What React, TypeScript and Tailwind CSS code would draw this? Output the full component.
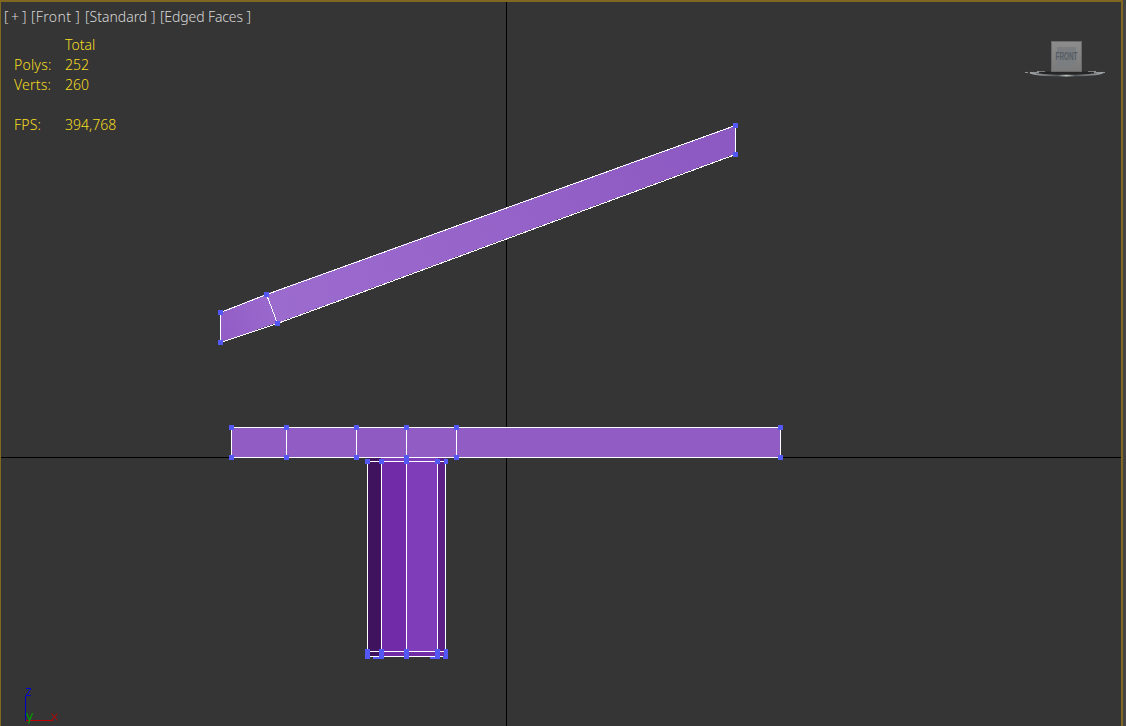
import React from 'react';

const labels = [
  { text: '[', box: 'w-[7px]', spacing: 'tracking-[0px]' },
  { text: '+', box: 'w-[10px]', spacing: 'tracking-[0px]' },
  { text: ']', box: 'w-[10px]', spacing: 'tracking-[0px] pl-[1px]' },
  { text: '[Front ]', box: 'w-[54px]', spacing: 'tracking-[0.35px]' },
  { text: '[Standard ]', box: 'w-[75px]', spacing: 'tracking-[0px]' },
  { text: '[Edged Faces ]', box: 'w-[100px]', spacing: 'tracking-[-0.12px]' },
];

const stats = [
  ['', 'Total'],
  ['Polys:', '252'],
  ['Verts:', '260'],
  ['', ''],
  ['FPS:', '394,768'],
];

const vertices: [number, number][] = [
  [735, 125], [735, 154], [266, 294], [277, 323], [220, 312], [220, 342],
  [231, 427], [286, 427], [356, 427], [406, 427], [456, 427], [780, 427],
  [231, 457], [286, 457], [356, 457], [406, 457], [456, 457], [780, 457],
  [367, 461], [381, 461], [406, 461], [437, 461],
  [367, 651], [381, 651], [406, 651], [437, 651],
  [367, 656], [381, 656], [406, 656], [437, 656],
];

function Scene() {
  return (
    <svg className="absolute inset-0" width="1126" height="726" shapeRendering="crispEdges">
      <defs>
        <linearGradient id="roof" gradientUnits="userSpaceOnUse" x1="277" y1="310" x2="735" y2="140">
          <stop offset="0" stopColor="#9c6bce" />
          <stop offset="0.35" stopColor="#9866cb" />
          <stop offset="1" stopColor="#8c58c1" />
        </linearGradient>
        <linearGradient id="eave" gradientUnits="userSpaceOnUse" x1="220" y1="330" x2="272" y2="305">
          <stop offset="0" stopColor="#925dc6" />
          <stop offset="1" stopColor="#9a69cd" />
        </linearGradient>
      </defs>
      <path d="M506 2h1v724h-1zM1 457h1120v1H1z" fill="#000" />

      <path d="M266 294L735 125V154L277 323Z" fill="url(#roof)" />
      <path d="M220 312L266 294L277 323L220 342Z" fill="url(#eave)" />
      <path
        d="M220.5 342.5V312.5L266.5 294.5L735.5 125.5V154.5L277.5 323.5L220.5 342.5M266.5 294.5L277.5 323.5"
        fill="none"
        stroke="#fff"
      />

      <path d="M231 427h550v31H231z" fill="#915dc5" />
      <path d="M356 427h50v31h-50z" fill="#8f5bc3" />
      <path
        d="M231.5 427.5H780.5V457.5H231.5ZM286.5 427V457M356.5 427V457M406.5 427V457M456.5 427V457"
        fill="none"
        stroke="#fff"
      />

      <path d="M367 458h79v199h-79z" fill="#803dba" />
      <path d="M367 458h14v194h-14z" fill="#40135f" />
      <path d="M381 462h25v190h-25z" fill="#712ba8" />
      <path d="M438 458h7v194h-7z" fill="#5a2088" />
      <path d="M367 652h14v4h-14z" fill="#40135f" />
      <path d="M381 652h64v4h-64z" fill="#702ba6" />
      <path
        d="M367.5 461V656.5H445.5V461M367 461.5H446M367 651.5H446M381.5 461V656M406.5 457V656M437.5 461V656"
        fill="none"
        stroke="#fff"
      />

      {vertices.map(([x, y]) => (
        <rect key={`${x}-${y}`} x={x - 2} y={y - 2} width="5" height="5" fill="#5357f3" />
      ))}
      <path
        d="M444 459h4v5h-4zM444 649h4v10h-4zM443 656h1v3h-1zM373 657h6v2h-6zM430 657h5v2h-5z"
        fill="#5357f3"
      />

      <g fill="none">
        <path d="M25.5 696V721" stroke="#0000bd" />
        <path d="M26 688.5H31M30.5 689V690M30 690.5H29M28.5 691V693M28 693.5H27M26.5 694V695M26 695.5H31" stroke="#0000d0" />
        <path d="M26 720.5H53" stroke="#c00000" />
        <g shapeRendering="geometricPrecision">
          <path d="M51.5 713.5L57.5 720.5M57.5 713.5L51.5 720.5" stroke="#c80000" />
          <path d="M26.5 713L29.7 720M32.5 713L28.4 723.5" stroke="#009c00" strokeWidth="1.25" />
        </g>
      </g>
    </svg>
  );
}

function ViewCube() {
  return (
    <svg className="absolute left-[1020px] top-[36px]" width="92" height="46">
      <defs>
        <linearGradient id="face" x1="0" y1="0" x2="0" y2="1">
          <stop offset="0" stopColor="#8c8c8c" />
          <stop offset="1" stopColor="#7b7b7b" />
        </linearGradient>
        <linearGradient id="ring" x1="0" y1="0" x2="1" y2="0">
          <stop offset="0" stopColor="#a5a8aa" />
          <stop offset="0.22" stopColor="#777a7d" />
          <stop offset="0.38" stopColor="#55585a" />
          <stop offset="0.5" stopColor="#c4c8c9" />
          <stop offset="0.62" stopColor="#55585a" />
          <stop offset="0.78" stopColor="#777a7d" />
          <stop offset="1" stopColor="#a5a8aa" />
        </linearGradient>
      </defs>
      <ellipse cx="46" cy="37.3" rx="24" ry="2.6" fill="#262626" />
      <path d="M5 36.5h3M11 36.5h8M74 36.5h11M17 35.5h8M68 35.5h8" stroke="#909294" />
      <path d="M10 36.5C18 40.6 74 40.6 83 36.5" fill="none" stroke="url(#ring)" strokeWidth="1.8" />
      <path d="M19 36.3h12M62 36.3h12" stroke="#242424" />
      <rect x="31.5" y="5.5" width="30" height="30" fill="url(#face)" stroke="#6b6b6b" />
      <rect x="37" y="11" width="19" height="19" fill="#7b7e80" />
      <text
        x="35.5"
        y="24"
        textLength="22"
        lengthAdjust="spacingAndGlyphs"
        fontFamily="Liberation Sans, sans-serif"
        fontSize="10"
        fontWeight="bold"
        fill="#555c64"
      >
        FRONT
      </text>
    </svg>
  );
}

export default function App() {
  return (
    <main className="relative flex h-[726px] w-[1126px] overflow-hidden bg-[#444444] font-['Noto_Sans',sans-serif] text-[14px]">
      <section className="h-full w-[1123px] border-t-2 border-r-2 border-l border-[#816821] bg-[#353535]" />
      <Scene />
      <div className="absolute left-[4px] top-[7px] flex leading-[20px] text-[#d8d8d8]">
        {labels.map(({ text, box, spacing }) => (
          <span key={text} className={`${box} ${spacing} whitespace-pre font-light`}>
            {text}
          </span>
        ))}
      </div>
      <div className="absolute left-[14px] top-[35px] grid grid-cols-[51px_auto] auto-rows-[20px] leading-[20px] font-light text-[#f6de20]">
        {stats.flatMap(([name, value], row) => [
          <span key={`n${row}`} className="tracking-[0.2px]">{name}</span>,
          <span key={`v${row}`} className="tracking-[0px]">{value}</span>,
        ])}
      </div>
      <ViewCube />
    </main>
  );
}
